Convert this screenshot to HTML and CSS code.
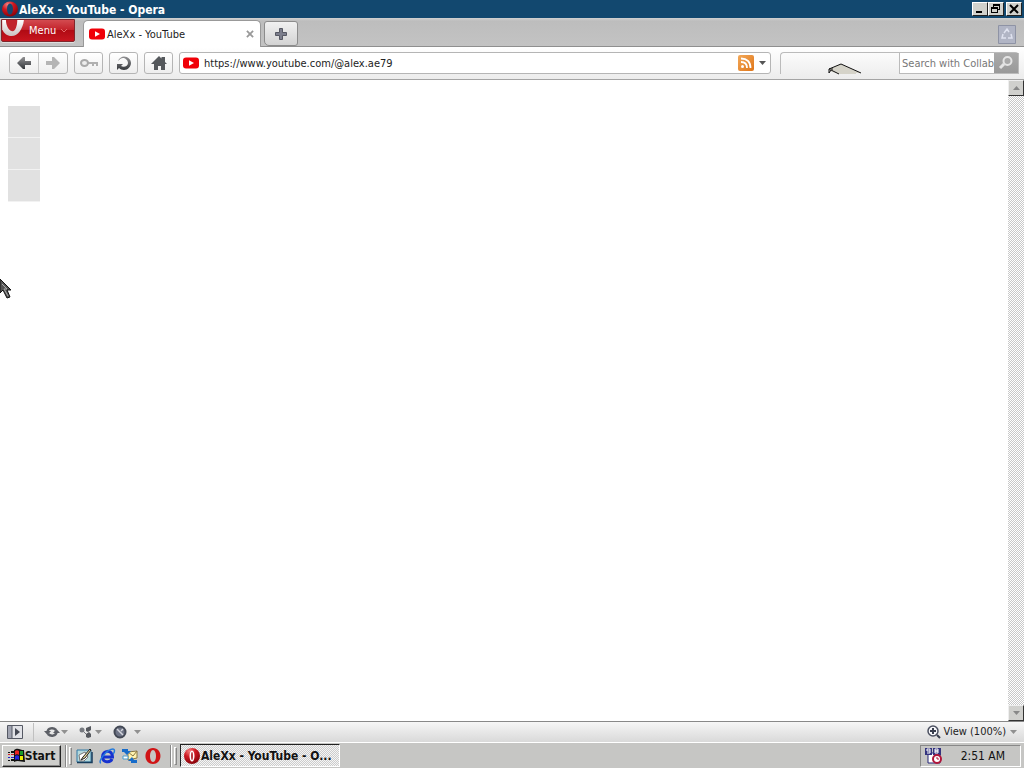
FILE: index.html
```html
<!DOCTYPE html>
<html lang="en">
<head>
<meta charset="utf-8">
<title>AleXx - YouTube - Opera</title>
<link rel="stylesheet" href="styles.css">
</head>
<body>
<svg class="defs" aria-hidden="true">
  <defs>
    <radialGradient id="red" cx=".35" cy=".2" r=".9"><stop offset="0" stop-color="#f48080"/><stop offset=".4" stop-color="#cf1820"/><stop offset="1" stop-color="#7c0008"/></radialGradient>
    <linearGradient id="silver" x1="0" y1="0" x2="0" y2="1"><stop offset="0" stop-color="#fff"/><stop offset="1" stop-color="#c9c0c0"/></linearGradient>
    <linearGradient id="orange" x1="0" y1="0" x2="1" y2="1"><stop offset="0" stop-color="#f3a95a"/><stop offset="1" stop-color="#df7518"/></linearGradient>
    <linearGradient id="steel" x1="0" y1="0" x2="0" y2="1"><stop offset="0" stop-color="#929294"/><stop offset="1" stop-color="#34373b"/></linearGradient>
    <symbol id="yt" viewBox="0 0 16 12"><rect width="16" height="11" y=".5" rx="3" fill="#f00008"/><path d="M6 3.2 11 6 6 8.8Z" fill="#fff"/></symbol>
    <symbol id="down" viewBox="0 0 7 4"><path d="M0 0h7L3.500 4Z" fill="currentColor"/></symbol>
  </defs>
</svg>

<header class="titlebar">
  <svg class="title-logo" viewBox="0 0 16 16"><ellipse cx="8" cy="8" rx="8" ry="7.500" fill="url(#red)"/><ellipse cx="8" cy="8" rx="3" ry="5.500" fill="#17486f"/></svg>
  <h1 class="title">AleXx - YouTube - Opera</h1>
  <div class="window-buttons">
    <button class="win-btn" aria-label="Minimize"><svg viewBox="0 0 14 12"><path d="M3 8h6v2H3Z"/></svg></button>
    <button class="win-btn" aria-label="Restore"><svg viewBox="0 0 14 12"><path d="M4 1h7v6H9V6h1V3H5v1H4ZM2 4h7v6H2Zm1 2v3h5V6Z" fill-rule="evenodd"/></svg></button>
    <button class="win-btn close" aria-label="Close"><svg viewBox="0 0 14 12"><path d="m3 2 8 8m0-8-8 8" stroke="#000" stroke-width="2"/></svg></button>
  </div>
</header>

<nav class="tabbar">
  <button class="menu">
    <svg class="menu-logo" viewBox="0 0 24 18"><path d="M0 0h23c-1 9-6 17-13 17-5 0-8-3-10-7Z" fill="url(#silver)"/><path d="M4 0h12c0 6-2 12-5 12S4 7 4 0Z" fill="#c1242b"/></svg>
    <span>Menu</span>
    <svg class="chevron" viewBox="0 0 8 5"><path d="m1 1 3 3 3-3" fill="none" stroke="#e46a6a"/></svg>
  </button>
  <div class="tab">
    <svg class="yt"><use href="#yt"/></svg>
    <span class="tab-title">AleXx - YouTube</span>
    <button class="tab-close" aria-label="Close tab"><svg viewBox="0 0 9 9"><path d="m1 1 7 7m0-7L1 8" stroke="#999" stroke-width="2"/></svg></button>
  </div>
  <button class="new-tab" aria-label="New tab"><svg viewBox="0 0 12 12"><path d="M4.500.500h3v4h4v3h-4v4h-3v-4h-4v-3h4Z" fill="#7c7e8c" stroke="#565863"/></svg></button>
  <button class="trash" aria-label="Closed tabs"><svg viewBox="0 0 18 19"><path d="M.5.500h17v18H.5Z" fill="#b1b5c5" stroke="#8e93a5"/><path d="m6 8 3-4 2 3M5 9l-1 4h4m5-4 1 4h-4" fill="none" stroke="#dfe2ef" stroke-width="1.500"/></svg></button>
</nav>

<div class="toolbar">
  <div class="nav-pair">
    <button class="tool" aria-label="Back"><svg viewBox="0 0 18 16"><path d="m2 8 6-6h2v4h6v4h-6v4H8Z" fill="url(#steel)"/></svg></button>
    <button class="tool" aria-label="Forward"><svg viewBox="0 0 18 16"><path d="m16 8-6-6H8v4H2v4h6v4h2Z" fill="#b5b5b5"/></svg></button>
  </div>
  <button class="tool single" aria-label="Password"><svg viewBox="0 0 18 16"><path d="M7 7h11v4h-2V9h-2v2h-2V9H7Z" fill="#b0b0b0"/><ellipse cx="4.500" cy="8" rx="3.500" ry="3" fill="#eee" stroke="#aaa" stroke-width="2"/></svg></button>
  <button class="tool single" aria-label="Reload"><svg viewBox="0 0 18 16"><path d="M3 6c1-3 4-4.500 6-4.500 4 0 7 3 7 6.500s-3 7-7 7c-2 0-4-1-5-2l-2 2V9h6l-2 2c3 2 7 0 7-3S10 3 8 3C6 3 5 4 3 6Z" fill="url(#steel)"/></svg></button>
  <button class="tool single" aria-label="Home"><svg viewBox="0 0 18 16"><path d="m9 1 2.500 2.500V2H15v5l2 2h-2v6h-4v-4H8v4H4V9H1Z" fill="#55585c"/></svg></button>
  <div class="address">
    <svg class="yt"><use href="#yt"/></svg>
    <input class="field" type="text" aria-label="Address" value="https://www.youtube.com/@alex.ae79">
    <button class="feed" aria-label="Feed"><svg viewBox="0 0 16 16"><rect width="16" height="16" rx="2" fill="url(#orange)"/><circle cx="4.500" cy="11.500" r="1.500" fill="#fff"/><path d="M3 7c4 0 6 2 6 6M3 3.500c6 0 9.500 3 9.500 9.500" fill="none" stroke="#fff" stroke-width="1.800"/></svg></button>
    <button class="drop" aria-label="History"><svg><use href="#down"/></svg></button>
  </div>
  <div class="extra">
    <svg class="slab" viewBox="0 0 34 11"><path d="M1 6 13 1l20 9h-5v1H11L1 8Z" fill="#d5d3c9"/><path d="m1 6 12-5 20 9M1 6v4l2-3 8 4M1 6h4" fill="none" stroke="#111"/></svg>
    <div class="search">
      <input class="field" type="text" aria-label="Search" placeholder="Search with Collab'">
      <button class="go" aria-label="Search"><svg viewBox="0 0 16 16"><circle cx="9.500" cy="6" r="4" fill="#a9a9a9" stroke="#e4e4e4" stroke-width="2"/><path d="m6 9-4 4" stroke="#e4e4e4" stroke-width="3"/></svg></button>
    </div>
  </div>
</div>

<main class="view">
  <div class="page">
    <div class="block"></div><div class="block"></div><div class="block"></div>
    <svg class="pointer" viewBox="0 0 12 22"><path d="M0 1v14l3-3 4 8 3-1-3-7h4Z" fill="#555" stroke="#111"/><path d="m2 6 5 5H4l4 7" fill="none" stroke="#aaa"/></svg>
  </div>
  <div class="scrollbar">
    <button class="scroll-btn" aria-label="Scroll up"><svg class="up"><use href="#down"/></svg></button>
    <button class="scroll-btn" aria-label="Scroll down"><svg><use href="#down"/></svg></button>
  </div>
</main>

<footer class="statusbar">
  <button class="status panel" aria-label="Panels"><svg viewBox="0 0 16 14"><path d="M.5.500h15v13H.5Z" fill="#e1e2e7" stroke="#555964"/><path d="M1 1h4v12H1Z" fill="#a0a3b0"/><path d="M5 1v12" stroke="#555964"/><path d="m8 3 5 4-5 4Z" fill="#454954"/></svg></button>
  <button class="status" aria-label="Synchronize"><svg class="glyph" viewBox="0 0 16 14"><path d="M3.500 7C4 3 9 2 12 5M12.500 7c-.5 4-5.500 5-8.500 2" fill="none" stroke="#5c5f66" stroke-width="2.500"/><path d="M0 6h7l-3.500 4Zm16 2H9l3.500-4Z" fill="#5c5f66"/></svg><svg class="arrow"><use href="#down"/></svg></button>
  <button class="status" aria-label="Share"><svg class="glyph" viewBox="0 0 16 14"><path d="m4 5 6 6" fill="none" stroke="#777a80"/><circle cx="4" cy="5" r="2.500" fill="#777a80"/><path d="m8 3 5-2v4l-3 2-2-1Zm0 6 3-2 2 2v3l-3 1-2-1Z" fill="#55585e"/></svg><svg class="arrow"><use href="#down"/></svg></button>
  <button class="status turbo" aria-label="Turbo"><svg class="glyph" viewBox="0 0 16 14"><circle cx="8" cy="7" r="5.500" fill="#6e7486" stroke="#434955" stroke-width="2"/><path d="m5 4 6 6M9 6l2-2" stroke="#d4d5dd" stroke-width="1.500"/></svg><svg class="arrow"><use href="#down"/></svg></button>
  <button class="status zoom"><svg class="glyph" viewBox="0 0 14 14"><circle cx="6" cy="6" r="5" fill="#f7f7fa" stroke="#4b5060" stroke-width="1.500"/><path d="M3 6h6M6 3v6m4 1 3 3" stroke="#373d4c" stroke-width="2"/></svg><span>View (100%)</span><svg class="arrow"><use href="#down"/></svg></button>
</footer>

<div class="taskbar">
  <button class="start"><svg viewBox="0 0 17 15"><path d="M0 4h2v1H0Zm3-1h3v2H3Z" fill="#111"/><path d="M0 6h2v1H0Zm3 0h3v1H3Z" fill="#d22"/><path d="M0 9h2v1H0Zm3 0h3v1H3Z" fill="#22c"/><path d="M0 12h2v1H0Zm3-1h3v2H3Z" fill="#111"/><path d="M6 2c4-3 6 0 10 0l1 12c-4 0-7-2-11 0Z" fill="#111"/><path d="M7 3c1-1 3-1 4 0v4c-1-1-3-1-4 0Z" fill="#e22"/><path d="M12 3h3v4h-3Z" fill="#1a9a28"/><path d="M7 8c1-1 3-1 4 0v4c-1-1-3-1-4 0Z" fill="#22d"/><path d="M12 8h3v4h-3Z" fill="#ee0"/></svg><span>Start</span></button>
  <i class="rule"></i><i class="grip"></i>
  <div class="quick">
    <button aria-label="Show Desktop"><svg viewBox="0 0 16 16"><path d="M1 2h14v12H1Z" fill="#b5d9dc" stroke="#3178a5"/><path d="M1 14.500h15V4" fill="none" stroke="#173d5c" stroke-width="1.500"/><path d="m3 7 6-3 3 5-4 4H4Z" fill="#fff" stroke="#777"/><path d="m14 1-7 8-2 3 4-2 6-8Z" fill="#e6d79a" stroke="#222"/></svg></button>
    <button aria-label="Internet Explorer"><svg viewBox="0 0 16 16"><path d="M4 9h9.500c0-8-10-7-10 0 0 6 8 6 9.500 2" fill="none" stroke="#1732cf" stroke-width="3"/><path d="M2 15C-2 14 8 1 14 1c2 0 2 3 0 5" fill="none" stroke="#247bdd" stroke-width="1.500"/></svg></button>
    <button aria-label="Outlook Express"><svg viewBox="0 0 16 16"><path d="m6 4 9-1v7l-9 2Z" fill="#fff3b1" stroke="#8b7741"/><path d="m6 4 5 4 4-5" fill="none" stroke="#8b7741"/><path d="M0 1h6v2h3L5 7 2 4H0Zm15 14h-6v-2H6l4-4 2 3h3Z" fill="#176cca"/><path d="M1 8h5v3H1Z" fill="#fff" stroke="#4a9dcc"/></svg></button>
    <button aria-label="Opera"><svg viewBox="0 0 16 16"><path d="M8 0c10 0 10 16 0 16S-2 0 8 0Zm0 2C4 2 4 14 8 14s4-12 0-12Z" fill="#d01416" fill-rule="evenodd"/></svg></button>
  </div>
  <i class="rule second"></i><i class="grip last"></i>
  <button class="task"><svg viewBox="0 0 16 16"><circle cx="8" cy="8" r="8" fill="url(#red)"/><ellipse cx="8" cy="8" rx="2.500" ry="5.500" fill="#fff"/><ellipse cx="8" cy="8" rx="1" ry="4" fill="#b6343a"/></svg><span>AleXx - YouTube - O...</span></button>
  <div class="tray"><svg viewBox="0 0 18 16"><path d="M3 5h12v10H3Z" fill="#fff" stroke="#252575"/><path d="M0 0h7v7H0Zm8 0h8v7H8Z" fill="#34347f"/><path d="M2 1h3v2H2Zm3 2v2H2m8-4h3v2h-3Zm0 2h3v2h-3Z" fill="none" stroke="#fff"/><circle cx="12" cy="11" r="4" fill="#fff" stroke="#b1163a" stroke-width="2"/><path d="M12 9v2h2" fill="none" stroke="#b1163a"/></svg><time>2:51 AM</time></div>
</div>
</body>
</html>
```
FILE: styles.css
```css
* { box-sizing: border-box; }
body {
  margin: 0;
  height: 100vh;
  display: flex;
  flex-direction: column;
  overflow: hidden;
  background: #fff;
  color: #222;
  font: 11px/14px "DejaVu Sans Condensed", "DejaVu Sans", sans-serif;
}
button, input { font: inherit; color: inherit; }
button { padding: 0; border: 0; background: none; display: flex; align-items: center; justify-content: center; flex: none; }
svg { display: block; flex: none; overflow: visible; }
.defs { position: absolute; width: 0; height: 0; }
.yt { width: 16px; height: 12px; }

.titlebar { flex: none; height: 18px; display: flex; align-items: center; padding: 0 2px; background: #12486f; color: #fff; }
.title-logo { width: 16px; height: 16px; }
.title { margin: 0 auto 0 1px; padding-top: 2px; font: bold 12px/16px "DejaVu Sans Condensed", "DejaVu Sans", sans-serif; }
.window-buttons { display: flex; }
.win-btn { width: 16px; height: 14px; background: #d1d1cc; border: 1px solid; border-color: #fff #222 #222 #fff; }
.win-btn svg { width: 14px; height: 12px; }
.close { margin-left: 2px; }

.tabbar { flex: none; height: 29px; display: flex; align-items: flex-start; padding: 0 8px 0 1px; background: linear-gradient(#d2d2d2 0, #bdbdbd 3px, #c3c3c3 28px, #8f8f8f 28px); }
.menu { width: 74px; height: 23px; margin: 1px 8px 0 0; padding-bottom: 1px; justify-content: flex-start; gap: 4px; background: linear-gradient(#d34b50, #c4242c 45%, #b10b14 50%, #c8151f); border: 1px solid #80272c; border-radius: 0 0 2px 2px; color: #fff; box-shadow: 0 1px #ddd; overflow: hidden; }
.menu-logo { width: 23px; height: 17px; align-self: flex-start; }
.menu span { padding-top: 2px; }
.chevron { width: 8px; height: 5px; }
.tab { width: 178px; height: 27px; margin-top: 2px; display: flex; align-items: center; gap: 2px; padding: 0 6px 0 5px; background: #fff; border: 1px solid #999; border-width: 1px 1px 0; border-radius: 5px 5px 0 0; }
.tab-title { flex: 1; padding-top: 1px; }
.tab-close svg { width: 8px; height: 8px; }
.new-tab { width: 34px; height: 25px; margin: 3px auto 0 3px; background: linear-gradient(#f1f1f1, #d3d3d3); border: 1px solid #8c8c8c; border-radius: 3px 3px 3px 5px; }
.new-tab svg { width: 12px; height: 12px; }
.trash { margin-top: 7px; }
.trash svg { width: 18px; height: 19px; }

.toolbar { flex: none; height: 33px; display: flex; align-items: center; gap: 6px; padding: 0 5px 0 9px; background: linear-gradient(#fff, #ececec); border-bottom: 1px solid #a4a4a4; }
.nav-pair, .single, .address { border: 1px solid #b5b5b5; border-radius: 3px; height: 22px; flex: none; }
.nav-pair { display: flex; width: 59px; background: linear-gradient(#fff, #eee); }
.nav-pair .tool { flex: 1; }
.nav-pair .tool + .tool { border-left: 1px solid #c7c7c7; }
.single { width: 29px; background: linear-gradient(#fff, #eee); }
.tool svg { width: 18px; height: 16px; }
.address { flex: 1; display: flex; align-items: center; background: #fff; padding: 0 3px; }
.field { flex: 1; min-width: 0; border: 0; outline: 0; background: none; padding: 2px 5px 0; }
.feed svg { width: 16px; height: 16px; }
.drop { width: 13px; padding-left: 4px; }
.drop svg { width: 7px; height: 4px; color: #555; }
.extra { width: 239px; height: 22px; margin-left: 3px; display: flex; justify-content: flex-end; align-items: flex-end; border: 1px solid #bbb; border-width: 1px 0 0 1px; border-radius: 4px 4px 0 0; }
.slab { width: 34px; height: 11px; margin-right: 37px; }
.search { width: 120px; height: 21px; display: flex; background: #fff; border: 1px solid #bbb; border-top: 0; }
.search .field { padding: 2px 0 0 2px; }
.field::placeholder { color: #777; opacity: 1; }
.go { width: 24px; background: linear-gradient(#aaa, #999); }
.go svg { width: 16px; height: 16px; }

.view { flex: 1; min-height: 0; display: flex; }
.page { flex: 1; position: relative; padding: 26px 8px; }
.block { width: 32px; height: 32px; background: #e1e1e1; border-bottom: 1px solid #f2f2f2; }
.pointer { position: absolute; left: 0; top: 198px; width: 12px; height: 22px; }
.scrollbar { width: 16px; display: flex; flex-direction: column; justify-content: space-between; background: repeating-conic-gradient(#c8c8c8 0 25%, #fff 0 50%) 0 0 / 2px 2px; }
.scroll-btn { width: 16px; height: 16px; background: #d0d0cd; border: 1px solid; border-color: #eee #333 #333 #eee; color: #888; }
.scroll-btn svg { width: 7px; height: 4px; }
.up { transform: rotate(180deg); }

.statusbar { flex: none; height: 21px; display: flex; align-items: center; padding-right: 7px; background: linear-gradient(#f6f6f6, #d9d9d9); border-top: 1px solid #888; }
.status { gap: 1px; margin-right: 10px; }
.glyph { width: 16px; height: 14px; }
.arrow { width: 7px; height: 4px; color: #909090; }
.panel { width: 34px; height: 18px; padding-left: 7px; justify-content: flex-start; border-right: 1px solid #c0c0c0; }
.panel svg { width: 16px; height: 14px; }
.turbo { margin: 0 auto 0 0; gap: 6px; }
.zoom { gap: 2px; margin: 0; }
.zoom .glyph { width: 14px; }
.zoom .arrow { margin-left: 2px; }

.taskbar { flex: none; height: 26px; display: flex; align-items: center; padding: 0 3px 0 2px; background: #c6c6c4; border-top: 1px solid #fff; font-size: 12px; color: #111; }
.start { width: 59px; height: 22px; background: #cececb; border: 1px solid; border-color: #fff #222 #222 #fff; box-shadow: inset -1px -1px #888; font-weight: bold; }
.start svg { width: 17px; height: 15px; }
.rule { width: 2px; height: 22px; margin-left: 4px; border-left: 1px solid #888; border-right: 1px solid #fff; }
.grip { width: 3px; height: 18px; margin: 0 4px 0 2px; border: 1px solid; border-color: #fff #888 #888 #fff; }
.quick { display: flex; gap: 7px; }
.quick svg { width: 16px; height: 16px; }
.second { margin-left: 9px; }
.last { margin-right: 3px; }
.task { width: 160px; height: 23px; padding-left: 3px; gap: 1px; justify-content: flex-start; overflow: hidden; background: repeating-conic-gradient(#ccc 0 25%, #f5f5f5 0 50%) 0 0 / 2px 2px; border: 1px solid; border-color: #222 #fff #fff #222; font-weight: bold; }
.task span { white-space: nowrap; padding-top: 1px; }
.task svg { width: 16px; height: 16px; }
.tray { width: 101px; height: 22px; margin-left: auto; padding: 0 15px 0 4px; display: flex; align-items: center; justify-content: space-between; border: 1px solid; border-color: #888 #fff #fff #888; }
.tray svg { width: 18px; height: 16px; }
```
